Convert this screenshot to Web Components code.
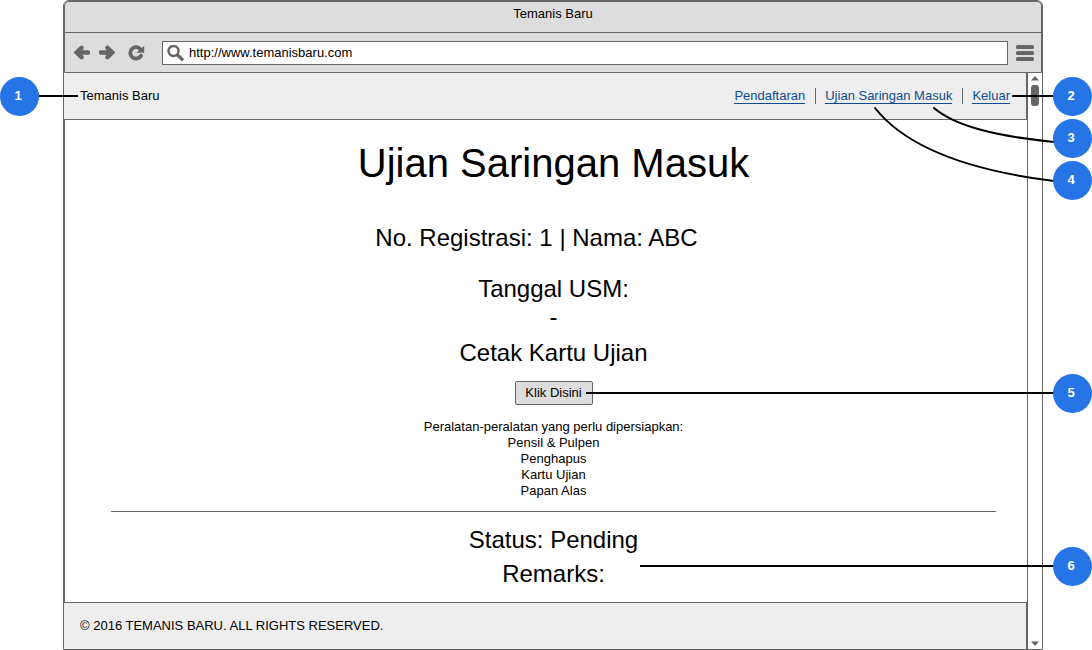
<!DOCTYPE html>
<html lang="id">
<head>
<meta charset="utf-8">
<title>Temanis Baru</title>
<style>
  html, body { margin: 0; background: #fff; }
  body { font: 13px/16px "Liberation Sans", Arial, sans-serif; color: #000; }
</style>
</head>
<body>
<annotated-page>
  <browser-window heading="Temanis Baru" url="http://www.temanisbaru.com">
    <site-header brand="Temanis Baru">
      <nav-link href="#pendaftaran">Pendaftaran</nav-link>
      <nav-link href="#usm">Ujian Saringan Masuk</nav-link>
      <nav-link href="#keluar">Keluar</nav-link>
    </site-header>
    <exam-page></exam-page>
    <site-footer>© 2016 TEMANIS BARU. ALL RIGHTS RESERVED.</site-footer>
  </browser-window>
  <note-layer slot="notes"></note-layer>
</annotated-page>

<script>
const define = (name, html, setup) => {
  const template = document.createElement('template');
  template.innerHTML = html;
  customElements.define(name, class extends HTMLElement {
    constructor() {
      super();
      this.attachShadow({ mode: 'open' }).append(template.content.cloneNode(true));
    }
    connectedCallback() { if (setup) setup(this, this.shadowRoot); }
  });
};

define('annotated-page', `
  <style>
    :host { display: block; position: relative; box-sizing: border-box; min-height: 100vh; padding: 0 49px 0 63px; --line: #666; --chrome: #ddd; --band: #eee; }
  </style>
  <slot></slot><slot name="notes"></slot>`);

define('browser-window', `
  <style>
    :host { display: flex; flex-direction: column; box-sizing: border-box; min-height: 100vh; border: 1px solid var(--line); border-radius: 6px 6px 0 0; }
    .chrome { background: var(--chrome); border: 1px solid var(--line); border-radius: 5px 5px 0 0; }
    .title { height: 30px; line-height: 24px; text-align: center; border-bottom: 1px solid var(--line); }
    .bar { display: flex; align-items: center; height: 39px; padding: 0 7px 0 9px; }
    button { padding: 0; border: 0; background: none; display: flex; }
    svg { display: block; fill: #666; }
    .back { margin-right: 9px; }
    .forward { margin-right: 13px; }
    .reload { margin-right: 17px; }
    label { flex: 1; min-width: 0; display: flex; align-items: center; gap: 5px; height: 22px; padding-left: 4px; margin-right: 8px; background: #fff; border: 1px solid var(--line); }
    input { flex: 1; min-width: 0; border: 0; padding: 0; outline: 0; background: none; color: inherit; font: inherit; }
    .view { flex: 1; display: flex; }
    .content { flex: 1; min-width: 0; display: flex; flex-direction: column; }
    .scroll { width: 14px; display: flex; flex-direction: column; align-items: center; padding: 3px 0; border-left: 1px solid var(--line); background: #fff; }
    .thumb { width: 8px; height: 21px; border-radius: 3px; background: #666; margin: 4px 0 auto; }
  </style>
  <div class="chrome">
    <div class="title"></div>
    <div class="bar">
      <button class="back" aria-label="Kembali"><svg width="16" height="16" viewBox="0 0 16 16"><path d="M7.500 2.800 2.600 7.500l4.900 4.700M3.500 7.500H14" fill="none" stroke="#666" stroke-width="4.400" stroke-linecap="round" stroke-linejoin="miter"/></svg></button>
      <button class="forward" aria-label="Maju"><svg width="16" height="16" viewBox="0 0 16 16"><path d="M8.500 2.800 13.400 7.500l-4.900 4.700M12.500 7.500H2" fill="none" stroke="#666" stroke-width="4.400" stroke-linecap="round" stroke-linejoin="miter"/></svg></button>
      <button class="reload" aria-label="Muat ulang"><svg width="17" height="16" viewBox="0 0 17 16"><path d="M11.800 3.600A5.700 5.700 0 1 0 13 10.700" fill="none" stroke="#666" stroke-width="3.800" stroke-linecap="round"/><path d="M16.200 1V7.800H8.400L11 5.300 13.300 2.900Z"/></svg></button>
      <label>
        <svg width="17" height="16" viewBox="0 0 17 16"><circle cx="6.500" cy="6" r="5" fill="none" stroke="#666" stroke-width="2.400"/><path d="m10.500 10 4.500 4.200" stroke="#666" stroke-width="3.400" stroke-linecap="round"/></svg>
        <input type="text" aria-label="Alamat">
      </label>
      <button aria-label="Menu"><svg width="18" height="16" viewBox="0 0 18 16"><rect width="18" height="4" rx="1.500"/><rect y="6" width="18" height="4" rx="1.500"/><rect y="12" width="18" height="4" rx="1.500"/></svg></button>
    </div>
  </div>
  <div class="view">
    <div class="content"><slot></slot></div>
    <div class="scroll" aria-hidden="true">
      <svg width="8" height="5" viewBox="0 0 8 5"><path d="M0 4.500 4 0l4 4.500Z"/></svg>
      <div class="thumb"></div>
      <svg width="8" height="5" viewBox="0 0 8 5"><path d="M0 .500 4 5l4-4.500Z"/></svg>
    </div>
  </div>`, (el, root) => {
    root.querySelector('.title').textContent = el.getAttribute('heading');
    root.querySelector('input').value = el.getAttribute('url');
  });

define('site-header', `
  <style>
    :host { display: flex; align-items: center; justify-content: space-between; height: 46px; padding: 0 16px; background: var(--band); border: solid var(--line); border-width: 0 1px 1px 0; }
    nav { display: flex; }
  </style>
  <span></span><nav aria-label="Utama"><slot></slot></nav>`, (el, root) => {
    root.querySelector('span').textContent = el.getAttribute('brand');
  });

define('nav-link', `
  <style>
    :host { display: flex; align-items: center; }
    :host(:not(:first-of-type))::before { content: ""; width: 1px; height: 16px; margin: 0 9px 0 10px; background: var(--line); }
    a { line-height: 14px; color: #0f4c8f; text-decoration: none; border-bottom: 1px solid; }
  </style>
  <a><slot></slot></a>`, (el, root) => {
    root.querySelector('a').href = el.getAttribute('href');
  });

define('exam-page', `
  <style>
    :host { flex: 1; display: block; padding: 19px 31px 14px 46px; border-left: 1px solid var(--line); text-align: center; background: #fff; }
    h1, h2, p, ul { margin: 0; padding: 0; font-weight: 400; }
    h1 { font-size: 40px; line-height: 48px; }
    h2, .date { font-size: 24px; line-height: 28px; }
    .who { margin: 37px 34px 23px 0; }
    .print { margin: 8px 0 14px; }
    button { width: 78px; height: 24px; padding: 0; display: block; margin: 0 auto 14px; font: inherit; color: inherit; background: var(--chrome); border: 1px solid var(--line); border-radius: 2px; }
    ul { list-style: none; }
    hr { height: 1px; border: 0; margin: 12px 0 14px; background: var(--line); }
    .remarks { margin-top: 6px; }
  </style>
  <main>
    <h1>Ujian Saringan Masuk</h1>
    <h2 class="who">No. Registrasi: 1 | Nama: ABC</h2>
    <h2>Tanggal USM:</h2>
    <p class="date">-</p>
    <h2 class="print">Cetak Kartu Ujian</h2>
    <button type="button">Klik Disini</button>
    <p>Peralatan-peralatan yang perlu dipersiapkan:</p>
    <ul><li>Pensil &amp; Pulpen</li><li>Penghapus</li><li>Kartu Ujian</li><li>Papan Alas</li></ul>
    <hr>
    <h2>Status: Pending</h2>
    <h2 class="remarks">Remarks:</h2>
  </main>`);

define('site-footer', `
  <style>
    :host { display: flex; align-items: center; height: 46px; padding: 0 16px; background: var(--band); border: solid var(--line); border-width: 1px 1px 0 0; }
  </style>
  <footer><slot></slot></footer>`);

define('note-pin', `
  <style>
    :host { position: absolute; display: grid; place-items: center; box-sizing: border-box; width: 39px; height: 39px; padding: 0 3px 2px 0; border-radius: 50%; background: #2575e7; color: #fff; font-weight: 700; }
  </style>
  <span><slot></slot></span>`);

/* Numbered notes and their connectors, drawn over the window. */
define('note-layer', `
  <style>
    :host { position: absolute; inset: 0; pointer-events: none; }
    svg { position: absolute; top: 0; right: 0; }
    .rule { position: absolute; right: 38px; height: 2px; background: #000; }
    .one { left: 38px; right: auto; width: 40px; top: 95px; }
    .five { left: calc(50% + 40px); top: 392px; }
    .six { left: calc(50% + 94px); top: 565px; }
    note-pin { right: 0; }
  </style>
  <div class="rule one"></div><div class="rule five"></div><div class="rule six"></div>
  <svg width="220" height="200" viewBox="872 0 220 200" fill="none" stroke="#000" stroke-width="2" stroke-linecap="round" aria-hidden="true">
    <path d="M1013 96H1054"/>
    <path d="M934 108C955 126 995 136 1054 142"/>
    <path d="M875 108C905 146 965 170 1054 181"/>
  </svg>
  <note-pin style="left:0;top:77px">1</note-pin>
  <note-pin style="top:77px">2</note-pin>
  <note-pin style="top:119px">3</note-pin>
  <note-pin style="top:161px">4</note-pin>
  <note-pin style="top:374px">5</note-pin>
  <note-pin style="top:547px">6</note-pin>`);
</script>
</body>
</html>
